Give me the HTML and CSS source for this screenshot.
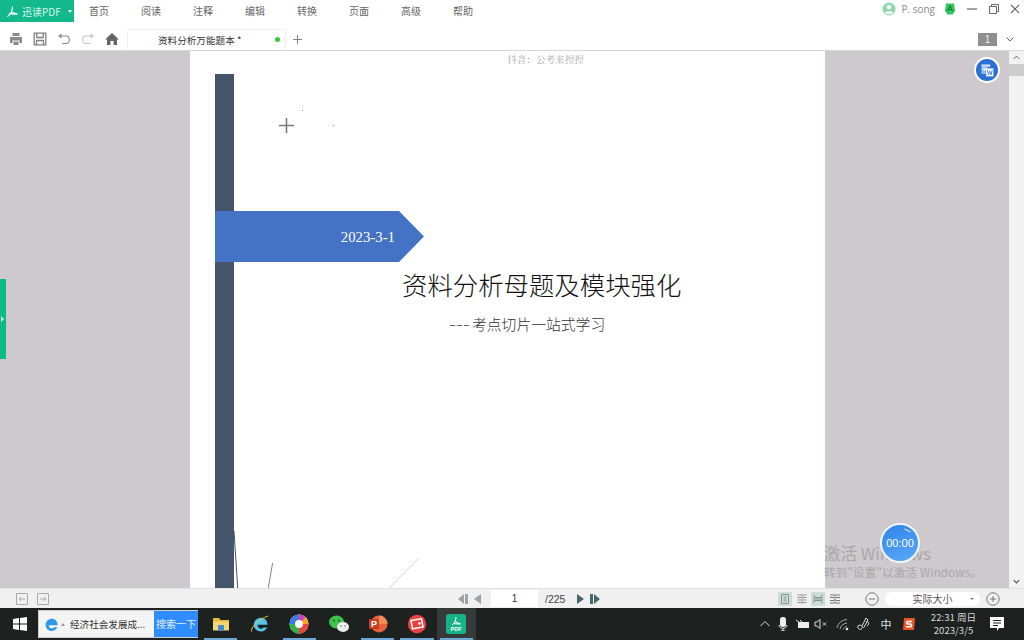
FILE: index.html
```html
<!DOCTYPE html>
<html lang="zh-CN">

<head>
    <meta charset="UTF-8">
    <title>迅读PDF</title>
    <link rel="stylesheet" href="styles.css">
</head>

<body>
    <header class="menubar">
        <div class="brand">
            <svg class="brand-logo" viewBox="0 0 14 14"><path d="M7 1.5 C7 6 5 10 1.5 12.5 M5.5 7.5 L12.5 10 L3 9.5" fill="none" stroke="#fff" stroke-width="1.2"/></svg>
            <span>迅读PDF</span>
            <span class="brand-arrow"></span>
        </div>
        <nav class="menu">
            <span>首页</span>
            <span>阅读</span>
            <span>注释</span>
            <span>编辑</span>
            <span>转换</span>
            <span>页面</span>
            <span>高级</span>
            <span>帮助</span>
        </nav>
        <div class="user">
            <svg class="ico-14" viewBox="0 0 14 14"><circle cx="7" cy="7" r="6.5" fill="#8fd9a8"/><circle cx="7" cy="5.2" r="2.3" fill="#fff"/><path d="M2.8 11 C3.5 8.6 10.5 8.6 11.2 11 C9.5 12.8 4.5 12.8 2.8 11Z" fill="#fff"/></svg>
            <span class="user-name">P. song</span>
            <svg class="ico-14 vip" viewBox="0 0 14 14"><path d="M3 1.5 H11 L12 9 L9.5 12.5 H4.5 L2 9Z" fill="#2fc65a"/><path d="M7 3.5 L4.5 9 M7 3.5 L9.5 9 M5 7.5 H9" stroke="#137a36" stroke-width="1" fill="none"/></svg>
        </div>
        <div class="win-btns">
            <svg class="ico-10" viewBox="0 0 10 10"><path d="M0 5 H10" stroke="#666" stroke-width="1.2"/></svg>
            <svg class="ico-10" viewBox="0 0 10 10"><path d="M.5 2.5 H7.5 V9.5 H.5Z M2.5 2.5 V.5 H9.5 V7.5 H7.5" fill="none" stroke="#666"/></svg>
            <svg class="ico-10" viewBox="0 0 10 10"><path d="M1 1 L9 9 M9 1 L1 9" stroke="#666" stroke-width="1.1"/></svg>
        </div>
    </header>

    <div class="toolbar">
        <div class="tools">
            <svg class="ico-14" viewBox="0 0 14 14"><path d="M3.5 1 H10.5 V4 H3.5Z M1 5 H13 V11 H10.5 V8.5 H3.5 V11 H1Z M4.5 9.5 H9.5 V13 H4.5Z" fill="#8a8a8a"/></svg>
            <svg class="ico-14" viewBox="0 0 14 14"><path d="M1.2 1.2 H12.8 V12.8 H1.2Z M3.8 1.2 V5.5 H10.2 V1.2 M3.5 12.8 V8.5 H10.5 V12.8" fill="none" stroke="#808080" stroke-width="1.3"/></svg>
            <svg class="ico-14" viewBox="0 0 14 14"><path d="M3 4 H9 C13.5 4 13.5 11.5 9 11.5 H5" fill="none" stroke="#8a8a8a" stroke-width="1.1"/><path d="M1 4 L4.5 1.5 V6.5Z" fill="#8a8a8a"/></svg>
            <svg class="ico-14" viewBox="0 0 14 14"><path d="M11 4 H5 C.5 4 .5 11.5 5 11.5 H9" fill="none" stroke="#c4c4c4" stroke-width="1.1"/><path d="M13 4 L9.5 1.5 V6.5Z" fill="#c4c4c4"/></svg>
            <svg class="ico-14" viewBox="0 0 14 14"><path d="M7 1 L14 7.5 H12 V13 H8.5 V9 H5.5 V13 H2 V7.5 H0Z" fill="#666"/></svg>
        </div>
        <div class="tab">
            <span class="tab-title">资料分析万能题本 *</span>
            <span class="tab-dot"></span>
        </div>
        <svg class="tab-add" viewBox="0 0 10 10"><path d="M5 0 V10 M0 5 H10" stroke="#777"/></svg>
        <span class="page-badge">1</span>
        <svg class="ico-10 badge-arrow" viewBox="0 0 10 10"><path d="M1.5 3.5 L5 7 L8.5 3.5" fill="none" stroke="#666"/></svg>
    </div>

    <main class="viewer">
        <div class="gutter">
            <button class="side-tab"></button>
        </div>

        <article class="page">
            <p class="page-head">抖音：公考来捏捏</p>
            <div class="spine"></div>
            <div class="ribbon">2023-3-1</div>
            <h1 class="title">资料分析母题及模块强化</h1>
            <p class="subtitle"><span class="dashes">---</span>考点切片一站式学习</p>
            <svg class="cross" viewBox="0 0 17 17"><path d="M8.5 1 V16 M1 8.5 H16" stroke="#777" stroke-width="1.5"/></svg>
            <svg class="art" viewBox="0 0 635 70">
                <path d="M44 13 L47.7 70" fill="none" stroke="#44546a"/>
                <path d="M82.6 45 L78.3 70" fill="none" stroke="#666" stroke-width=".8"/>
                <path d="M229 40 L199 70" fill="none" stroke="#ccc" stroke-width=".8"/>
            </svg>
            <span class="speck speck-a"></span>
            <span class="speck speck-b"></span>
        </article>

        <div class="gutter-right">
            <button class="to-word">
                <svg viewBox="0 0 20 20"><path d="M3 3 H14 V6 H3Z" fill="#cfe0f7"/><path d="M3 6 H11 V15 H3Z" fill="#8db6ec"/><path d="M9 8 H18 V18 H9Z" fill="#fff"/><path d="M3.5 9 H8 M6 7 L8.5 9 L6 11" stroke="#fff" stroke-width="1.2" fill="none"/><path d="M10.5 10 L11.8 16 L13.5 11.5 L15.2 16 L16.5 10" stroke="#2a6dd0" fill="none"/></svg>
            </button>
            <div class="activate">
                <p class="activate-big">激活 Windows</p>
                <p class="activate-small">转到"设置"以激活 Windows。</p>
            </div>
            <div class="timer">00:00</div>
        </div>

        <div class="scrollbar">
            <svg class="sb-arrow" viewBox="0 0 10 10"><path d="M2 6.5 L5 3.5 L8 6.5" fill="none" stroke="#555"/></svg>
            <div class="sb-thumb"></div>
            <svg class="sb-arrow sb-bottom" viewBox="0 0 10 10"><path d="M2 3.5 L5 6.5 L8 3.5" fill="none" stroke="#555" stroke-width="1.3"/></svg>
        </div>
    </main>

    <footer class="statusbar">
        <div class="history">
            <svg class="hist-btn" viewBox="0 0 12 12"><path d="M.5 .5 H11.5 V11.5 H.5Z" fill="none" stroke="#aaa"/><path d="M9 6 H3 M5 4 L3 6 L5 8" fill="none" stroke="#aaa"/></svg>
            <svg class="hist-btn" viewBox="0 0 12 12"><path d="M.5 .5 H11.5 V11.5 H.5Z" fill="none" stroke="#aaa"/><path d="M3 6 H9 M7 4 L9 6 L7 8" fill="none" stroke="#aaa"/></svg>
        </div>
        <div class="pager">
            <svg class="ico-10" viewBox="0 0 10 10"><path d="M6 0 V10 L0 5Z M7 0 H10 V10 H7Z" fill="#9aa5a5"/></svg>
            <svg class="ico-10" viewBox="0 0 10 10"><path d="M8 0 V10 L1 5Z" fill="#9aa5a5"/></svg>
            <span class="page-input">1</span>
            <span class="page-total">/225</span>
            <svg class="ico-10" viewBox="0 0 10 10"><path d="M2 0 V10 L9 5Z" fill="#47666e"/></svg>
            <svg class="ico-10" viewBox="0 0 10 10"><path d="M0 0 H3 V10 H0Z M4 0 V10 L10 5Z" fill="#47666e"/></svg>
        </div>
        <div class="views">
            <span class="view view-on"><svg class="ico-10" viewBox="0 0 10 10"><path d="M1.5 .5 H8.5 V9.5 H1.5Z M3.5 3 H6.5 M3.5 5 H6.5 M3.5 7 H6.5" fill="none" stroke="#7d9a90"/></svg></span>
            <span class="view"><svg class="ico-10" viewBox="0 0 10 10"><path d="M.5 1 H4 M.5 3.5 H4 M.5 6 H4 M.5 8.5 H4 M6 1 H9.5 M6 3.5 H9.5 M6 6 H9.5 M6 8.5 H9.5 M5 0 V10" fill="none" stroke="#777" stroke-width=".8"/></svg></span>
            <span class="view view-on"><svg class="ico-10" viewBox="0 0 10 10"><path d="M1 .5 V3.5 H9 V.5 M1 9.5 V6.5 H9 V9.5 M0 5 H10" fill="none" stroke="#7d9a90"/></svg></span>
            <span class="view"><svg class="ico-10" viewBox="0 0 10 10"><path d="M0 1 H4 M0 3.5 H4 M0 6.5 H4 M0 9 H4 M6 1 H10 M6 3.5 H10 M6 6.5 H10 M6 9 H10 M5 0 V10" fill="none" stroke="#666" stroke-width=".9"/></svg></span>
        </div>
        <div class="zoom">
            <svg class="ico-14" viewBox="0 0 14 14"><circle cx="7" cy="7" r="6.2" fill="none" stroke="#777"/><path d="M4 7 H10" stroke="#777"/></svg>
            <div class="zoom-box"><span>实际大小</span><i class="zoom-arrow"></i></div>
            <svg class="ico-14" viewBox="0 0 14 14"><circle cx="7" cy="7" r="6.2" fill="none" stroke="#777"/><path d="M4 7 H10 M7 4 V10" stroke="#777"/></svg>
        </div>
    </footer>

    <div class="taskbar">
        <svg class="start" viewBox="0 0 14 14"><path d="M0 2 L6 1.1 V6.6 H0Z M7 1 L14 0 V6.6 H7Z M0 7.4 H6 V12.9 L0 12Z M7 7.4 H14 V14 L7 13Z" fill="#fff"/></svg>
        <div class="search">
            <div class="search-field">
                <svg class="ie-small" viewBox="0 0 16 16"><path d="M2.6 8.8 H14.5 C14.8 4.3 11.8 1.8 8.3 1.8 C4.6 1.8 1.7 4.7 1.7 8.4 C1.7 12 4.6 14.8 8.3 14.8 C11 14.8 13.2 13.4 14.2 11 H10.6 C10 11.9 9.2 12.2 8.3 12.2 C6.4 12.2 5 10.8 5 8.8 M5.1 6.6 H11.3 C11 5.1 9.8 4.4 8.3 4.4 C6.8 4.4 5.5 5.1 5.1 6.6Z" fill="#2f9ae8"/></svg>
                <i class="search-up"></i>
                <span>经济社会发展成...</span>
            </div>
            <span class="search-btn">搜索一下</span>
        </div>
        <div class="apps">
            <span class="app app-open">
                <svg class="ico-18" viewBox="0 0 18 18"><path d="M1 3 H7 L8.5 5 H17 V15 H1Z" fill="#e8b93c"/><path d="M1 6.5 H17 V15.5 H1Z" fill="#f7d774"/><path d="M6 10 H12 V15.5 H6Z" fill="#3f8fd0"/></svg>
            </span>
            <span class="app">
                <svg class="ico-20" viewBox="0 0 20 20"><path d="M4.5 10.8 H17.5 C17.5 6.5 14.7 3.7 11 3.7 C7 3.7 3.8 6.8 3.8 10.7 C3.8 14.6 7 17.5 11 17.5 C13.9 17.5 16.2 16 17.2 13.6 H13.4 C12.8 14.4 12 14.8 11 14.8 C9 14.8 7.5 13.1 7.5 10.8 M7.7 8.4 H14.2 C13.9 6.9 12.6 6.2 11 6.2 C9.4 6.2 8.1 6.9 7.7 8.4Z" fill="#53c4ee"/><path d="M1.5 17.5 C0 14 9 5 18 2" fill="none" stroke="#e8b93c" stroke-width="1"/></svg>
            </span>
            <span class="app app-open">
                <svg class="ico-20" viewBox="0 0 20 20"><circle cx="10" cy="10" r="9.5" fill="#fff"/><path d="M10 10 L10 .5 A9.5 9.5 0 0 1 19.5 10Z" fill="#f5a623"/><path d="M10 10 L19.5 10 A9.5 9.5 0 0 1 10 19.5Z" fill="#e8463c"/><path d="M10 10 L10 19.5 A9.5 9.5 0 0 1 .5 10Z" fill="#33b24a"/><path d="M10 10 L.5 10 A9.5 9.5 0 0 1 10 .5Z" fill="#3a7de0"/><path d="M10 .5 A9.5 9.5 0 0 1 16.7 3.3 L10 10Z" fill="#d23fc0"/><circle cx="10" cy="10" r="4" fill="#fff"/></svg>
            </span>
            <span class="app">
                <svg class="ico-20" viewBox="0 0 20 20"><ellipse cx="7.5" cy="8" rx="7.5" ry="6.5" fill="#3fc24e"/><ellipse cx="14" cy="13" rx="6" ry="5" fill="#eee"/><circle cx="5" cy="6.5" r="1" fill="#1c5a25"/><circle cx="10" cy="6.5" r="1" fill="#1c5a25"/><circle cx="12" cy="12" r=".8" fill="#777"/><circle cx="16" cy="12" r=".8" fill="#777"/></svg>
            </span>
            <span class="app app-open">
                <svg class="ico-20" viewBox="0 0 20 20"><circle cx="11" cy="10" r="8.5" fill="#e8603c"/><path d="M11 1.5 A8.5 8.5 0 0 1 19.5 10 H11Z" fill="#f28a5a"/><rect x="1" y="5" width="10" height="10" rx="1" fill="#c8401f"/><text x="6" y="13" class="ppt-letter">P</text></svg>
            </span>
            <span class="app app-open">
                <svg class="ico-20" viewBox="0 0 20 20"><circle cx="10" cy="10" r="9.2" fill="#e8413f"/><path d="M4 6.5 L14.5 4.8 L16 13 L5.5 14.8Z" fill="none" stroke="#fff" stroke-width="1.5"/><circle cx="12.5" cy="9.5" r="1.3" fill="#fff"/></svg>
            </span>
            <span class="app app-open app-active">
                <svg class="ico-20" viewBox="0 0 20 20"><rect width="20" height="20" rx="3" fill="#17b388"/><path d="M10 3 C10 6 8.8 9 6 11 M8.8 7.5 L14.5 10 L7.5 9.7" fill="none" stroke="#fff"/><text x="10" y="17" class="pdf-letters">PDF</text></svg>
            </span>
        </div>
        <div class="tray">
            <svg class="ico-10" viewBox="0 0 10 10"><path d="M.5 7 L5 2.5 L9.5 7" fill="none" stroke="#ddd"/></svg>
            <svg class="ico-14" viewBox="0 0 14 14"><rect x="4" y="0" width="6" height="10" rx="2.5" fill="#eee"/><path d="M3 8 C3 12.5 11 12.5 11 8 M7 11.5 V14 M4.5 14 H9.5" fill="none" stroke="#eee"/></svg>
            <svg class="ico-14" viewBox="0 0 14 14"><path d="M2 5 H13 V11 H2Z" fill="#eee"/><path d="M0 3 L4 6 M4 3 L6 5" stroke="#eee"/></svg>
            <svg class="ico-14" viewBox="0 0 14 14"><path d="M1 5 H3 L6 2.5 V11.5 L3 9 H1Z" fill="none" stroke="#ddd"/><path d="M9 5.5 L12 8.5 M12 5.5 L9 8.5" stroke="#ddd"/></svg>
            <svg class="ico-14" viewBox="0 0 14 14"><path d="M1 11 C2 6 6 3 11 2.5 M4 12 C4.5 9 7 6.5 11 6 M7 12.5 C7.5 11 9 9.5 11 9.5" fill="none" stroke="#aaa"/><circle cx="11" cy="12" r="1.3" fill="#eee"/></svg>
            <svg class="ico-14" viewBox="0 0 14 14"><path d="M1 11 C-.5 8 4 7 5 9.5 C6 12 3 14 1 11 M5 9 L9 1 L11 3 L6.5 11 M9 5 C12 4 13 7 10 9" fill="none" stroke="#ddd"/></svg>
            <span class="ime">中</span>
            <svg class="ico-14" viewBox="0 0 14 14"><path d="M2 1 H13 L12 13 H1Z" fill="#e8552a"/><path d="M10 4.5 H6 C4 4.5 4 7 6 7 H8 C10 7 10 9.8 8 9.8 H4" fill="none" stroke="#fff" stroke-width="1.6"/></svg>
            <div class="clock">
                <span>22:31 周日</span>
                <span>2023/3/5</span>
            </div>
            <svg class="notice" viewBox="0 0 14 14"><path d="M0 0 H14 V11 H9 L7 14 V11 H0Z" fill="#fff"/><path d="M3 3.5 H11 M3 6 H11 M3 8.5 H8" stroke="#222"/></svg>
        </div>
    </div>
</body>

</html>
```

FILE: styles.css
```css
* {
    box-sizing: border-box;
}

html,
body {
    height: 100%;
}

body {
    margin: 0;
    width: 1024px;
    height: 640px;
    overflow: hidden;
    display: flex;
    flex-direction: column;
    background-color: #fff;
    color: #666;
    font-family: "Noto Sans CJK SC", "Noto Sans", sans-serif;
    font-size: 10px;
}

p,
h1 {
    margin: 0;
}

svg {
    display: block;
    flex: none;
}

.ico-10 {
    width: 10px;
    height: 10px;
}

.ico-14 {
    width: 14px;
    height: 14px;
}

.ico-18 {
    width: 18px;
    height: 18px;
}

.ico-20 {
    width: 20px;
    height: 20px;
}

/* menu */
.menubar {
    height: 25px;
    display: flex;
    align-items: flex-start;
}

.brand {
    width: 74px;
    height: 22px;
    padding-left: 6px;
    display: flex;
    align-items: center;
    gap: 3px;
    background-color: #14b98b;
    color: #d9f5ea;
}

.brand-logo {
    width: 13px;
    height: 13px;
}

.brand-arrow {
    margin-left: 4px;
    border: 2px solid transparent;
    border-top: 3px solid #fff;
    border-bottom: none;
}

.menu {
    display: flex;
    margin-left: -1px;
}

.menu span {
    width: 52px;
    height: 22px;
    line-height: 22px;
    text-align: center;
}

.user {
    margin-left: auto;
    height: 18px;
    display: flex;
    align-items: center;
}

.user-name {
    margin-left: 5px;
    color: #888;
    font-family: "Open Sans", sans-serif;
    font-size: 10px;
}

.vip {
    margin-left: 8px;
}

.win-btns {
    width: 67px;
    height: 18px;
    padding: 0 4px 0 10px;
    display: flex;
    align-items: center;
    justify-content: space-between;
}

/* toolbar */
.toolbar {
    height: 26px;
    padding: 3px 0 0 9px;
    display: flex;
    align-items: center;
    border-bottom: 1px solid #d8d8d8;
}

.tools {
    width: 118px;
    display: flex;
    gap: 10px;
}

.tab {
    width: 159px;
    height: 21px;
    padding: 0 5px 0 30px;
    display: flex;
    align-items: center;
    justify-content: space-between;
    border: 1px solid #f0f0f0;
    border-bottom: none;
    border-radius: 3px 3px 0 0;
    color: #333;
    font-size: 9.6px;
}

.tab-dot {
    width: 5px;
    height: 5px;
    border-radius: 50%;
    background-color: #3cc63c;
}

.tab-add {
    width: 9px;
    height: 9px;
    margin-left: 7px;
}

.page-badge {
    width: 19px;
    height: 13px;
    margin-left: auto;
    background-color: #8e9090;
    color: #eee;
    font-family: "Liberation Sans", sans-serif;
    line-height: 13px;
    text-align: center;
}

.badge-arrow {
    margin: 0 9px 0 8px;
}

/* document area */
.viewer {
    height: 537px;
    display: flex;
    background-color: #cdc9cc;
}

.gutter {
    width: 190px;
    position: relative;
}

.side-tab {
    position: absolute;
    left: 0;
    top: 228px;
    width: 6px;
    height: 80px;
    padding: 0;
    border: none;
    background-color: #0cbb84;
}

.side-tab::after {
    content: "";
    position: absolute;
    left: 1px;
    top: 37px;
    border: 3px solid transparent;
    border-left-color: #cdf5e6;
    border-right: none;
}

.page {
    width: 635px;
    position: relative;
    overflow: hidden;
    background-color: #fff;
}

.page-head {
    padding-top: 1px;
    text-align: center;
    color: #a8a8a8;
    font-family: "Noto Serif CJK SC", "Noto Sans CJK SC", serif;
    font-size: 9.6px;
    line-height: 15px;
    position: relative;
    left: 38px;
}

.spine {
    position: absolute;
    left: 25px;
    top: 23px;
    bottom: 0;
    width: 19px;
    background-color: #44546a;
}

.ribbon {
    position: absolute;
    left: 25px;
    top: 160px;
    width: 209px;
    height: 51px;
    padding: 1px 29px 0 0;
    display: flex;
    align-items: center;
    justify-content: flex-end;
    background-color: #4472c4;
    clip-path: polygon(0 0, 184px 0, 100% 50%, 184px 100%, 0 100%);
    color: #fff;
    font-family: "Liberation Serif", serif;
    font-size: 14.8px;
}

.title {
    position: absolute;
    left: 212px;
    top: 215px;
    color: #111;
    font-size: 25.4px;
    font-weight: 300;
    line-height: 36px;
    white-space: nowrap;
}

.subtitle {
    position: absolute;
    left: 259px;
    top: 262px;
    color: #333;
    font-size: 14.8px;
    font-weight: 300;
    line-height: 22px;
    white-space: nowrap;
}

.dashes {
    display: inline-block;
    width: 23px;
    transform: scaleX(1.4);
    transform-origin: left;
}

.cross {
    position: absolute;
    left: 88px;
    top: 66px;
    width: 17px;
    height: 17px;
}

.art {
    position: absolute;
    left: 0;
    bottom: 0;
    width: 635px;
    height: 70px;
}

.speck {
    position: absolute;
    width: 1px;
    height: 1px;
    background-color: #999;
}

.speck-a {
    left: 112px;
    top: 59px;
}

.speck-b {
    left: 143px;
    top: 74px;
}

.gutter-right {
    width: 184px;
    position: relative;
}

.to-word {
    position: absolute;
    left: 149px;
    top: 6px;
    width: 26px;
    height: 26px;
    padding: 3px;
    border: 2px solid #fff;
    border-radius: 50%;
    background-color: #2b6fd6;
}

.activate {
    position: absolute;
    left: -1px;
    top: 492px;
    color: #a9a7a9;
    white-space: nowrap;
}

.activate-big {
    font-size: 16.5px;
    line-height: 21px;
}

.activate-small {
    font-size: 11.5px;
    letter-spacing: .2px;
    line-height: 17px;
}

.timer {
    position: absolute;
    left: 55px;
    top: 472px;
    width: 40px;
    height: 40px;
    border: 2px solid #f2f6fb;
    border-radius: 50%;
    background: linear-gradient(160deg, #2f84ea, #5aa9f5);
    color: #fff;
    font-family: "Liberation Sans", sans-serif;
    font-size: 11px;
    line-height: 36px;
    text-align: center;
}

.timer::before {
    content: "";
    position: absolute;
    left: 22px;
    top: 5px;
    width: 7px;
    height: 1px;
    background-color: #d8e9fc;
    transform: rotate(25deg);
}

.scrollbar {
    width: 15px;
    position: relative;
    background-color: #f2f2f2;
}

.sb-arrow {
    width: 15px;
    height: 13px;
    padding: 2px;
}

.sb-thumb {
    height: 12px;
    background-color: #cdcdcd;
}

.sb-bottom {
    position: absolute;
    bottom: 0;
    left: 0;
}

/* status bar */
.statusbar {
    height: 20px;
    display: flex;
    align-items: center;
    border-top: 1px solid #e2e2e2;
    background-color: #f0f0f0;
    color: #444;
}

.history {
    width: 448px;
    padding-left: 16px;
    display: flex;
    gap: 9px;
}

.hist-btn {
    width: 12px;
    height: 12px;
}

.pager {
    width: 319px;
    padding-left: 10px;
    display: flex;
    align-items: center;
    gap: 5px;
}

.page-input {
    width: 47px;
    height: 17px;
    margin-left: 3px;
    background-color: #fff;
    color: #333;
    font-family: "Liberation Sans", sans-serif;
    font-size: 10px;
    line-height: 17px;
    text-align: center;
}

.page-total {
    width: 25px;
    margin-left: 2px;
    font-family: "Liberation Sans", sans-serif;
    font-size: 10.5px;
}

.views {
    width: 90px;
    margin-left: 11px;
    display: flex;
    gap: 2.7px;
}

.view {
    width: 14px;
    height: 14px;
    padding: 2px;
}

.view-on {
    background-color: #cfdcd8;
}

.zoom {
    display: flex;
    align-items: center;
    gap: 6px;
    margin-left: -3px;
}

.zoom-box {
    width: 95px;
    height: 14px;
    position: relative;
    border-radius: 7px;
    background-color: #fff;
    color: #555;
    font-size: 10px;
    line-height: 14px;
    text-align: center;
}

.zoom-arrow {
    position: absolute;
    right: 6px;
    top: 6px;
    border: 2px solid transparent;
    border-top: 2px solid #777;
    border-bottom: none;
}

/* windows taskbar */
.taskbar {
    height: 32px;
    display: flex;
    align-items: center;
    background-color: #1d2120;
}

.start {
    width: 14px;
    height: 14px;
    margin-left: 13px;
}

.search {
    width: 160px;
    height: 28px;
    margin-left: 11px;
    display: flex;
    border: 1px solid #ccc;
    border-width: 1px 0 1px 1px;
}

.search-field {
    width: 115px;
    padding-left: 5px;
    display: flex;
    align-items: center;
    background-color: #f4f4f4;
    color: #333;
    font-size: 9.6px;
}

.search-field span {
    white-space: nowrap;
}

.ie-small {
    width: 15px;
    height: 15px;
}

.search-up {
    margin: 0 5px 0 2px;
    border: 2px solid transparent;
    border-bottom: 3px solid #999;
    border-top: none;
}

.search-btn {
    width: 44px;
    background-color: #2f8dff;
    color: #e6f1ff;
    line-height: 26px;
    text-align: center;
}

.apps {
    margin-left: 3px;
    display: flex;
}

.app {
    width: 39.3px;
    height: 32px;
    display: flex;
    align-items: center;
    justify-content: center;
    position: relative;
}

.app-open::after {
    content: "";
    position: absolute;
    left: 3px;
    right: 3px;
    bottom: 0;
    height: 2px;
    background-color: #6ea7d6;
}

.app-active {
    background-color: #363b39;
}

.ppt-letter {
    fill: #fff;
    font-family: "Liberation Sans", sans-serif;
    font-size: 9px;
    font-weight: bold;
    text-anchor: middle;
}

.pdf-letters {
    fill: #fff;
    font-family: "Liberation Sans", sans-serif;
    font-size: 5.5px;
    font-weight: bold;
    text-anchor: middle;
}

.tray {
    margin-left: auto;
    padding-right: 20px;
    display: grid;
    grid-template-columns: 16px 20px 20px 16px 28px 14px 30px 16px 73px 14px;
    align-items: center;
    justify-items: center;
    color: #e4e4e4;
}

.ime {
    font-size: 11px;
}

.clock {
    display: flex;
    flex-direction: column;
    align-items: center;
    color: #d8d8d8;
    font-size: 9.6px;
    line-height: 13px;
}

.notice {
    width: 14px;
    height: 14px;
}
```
